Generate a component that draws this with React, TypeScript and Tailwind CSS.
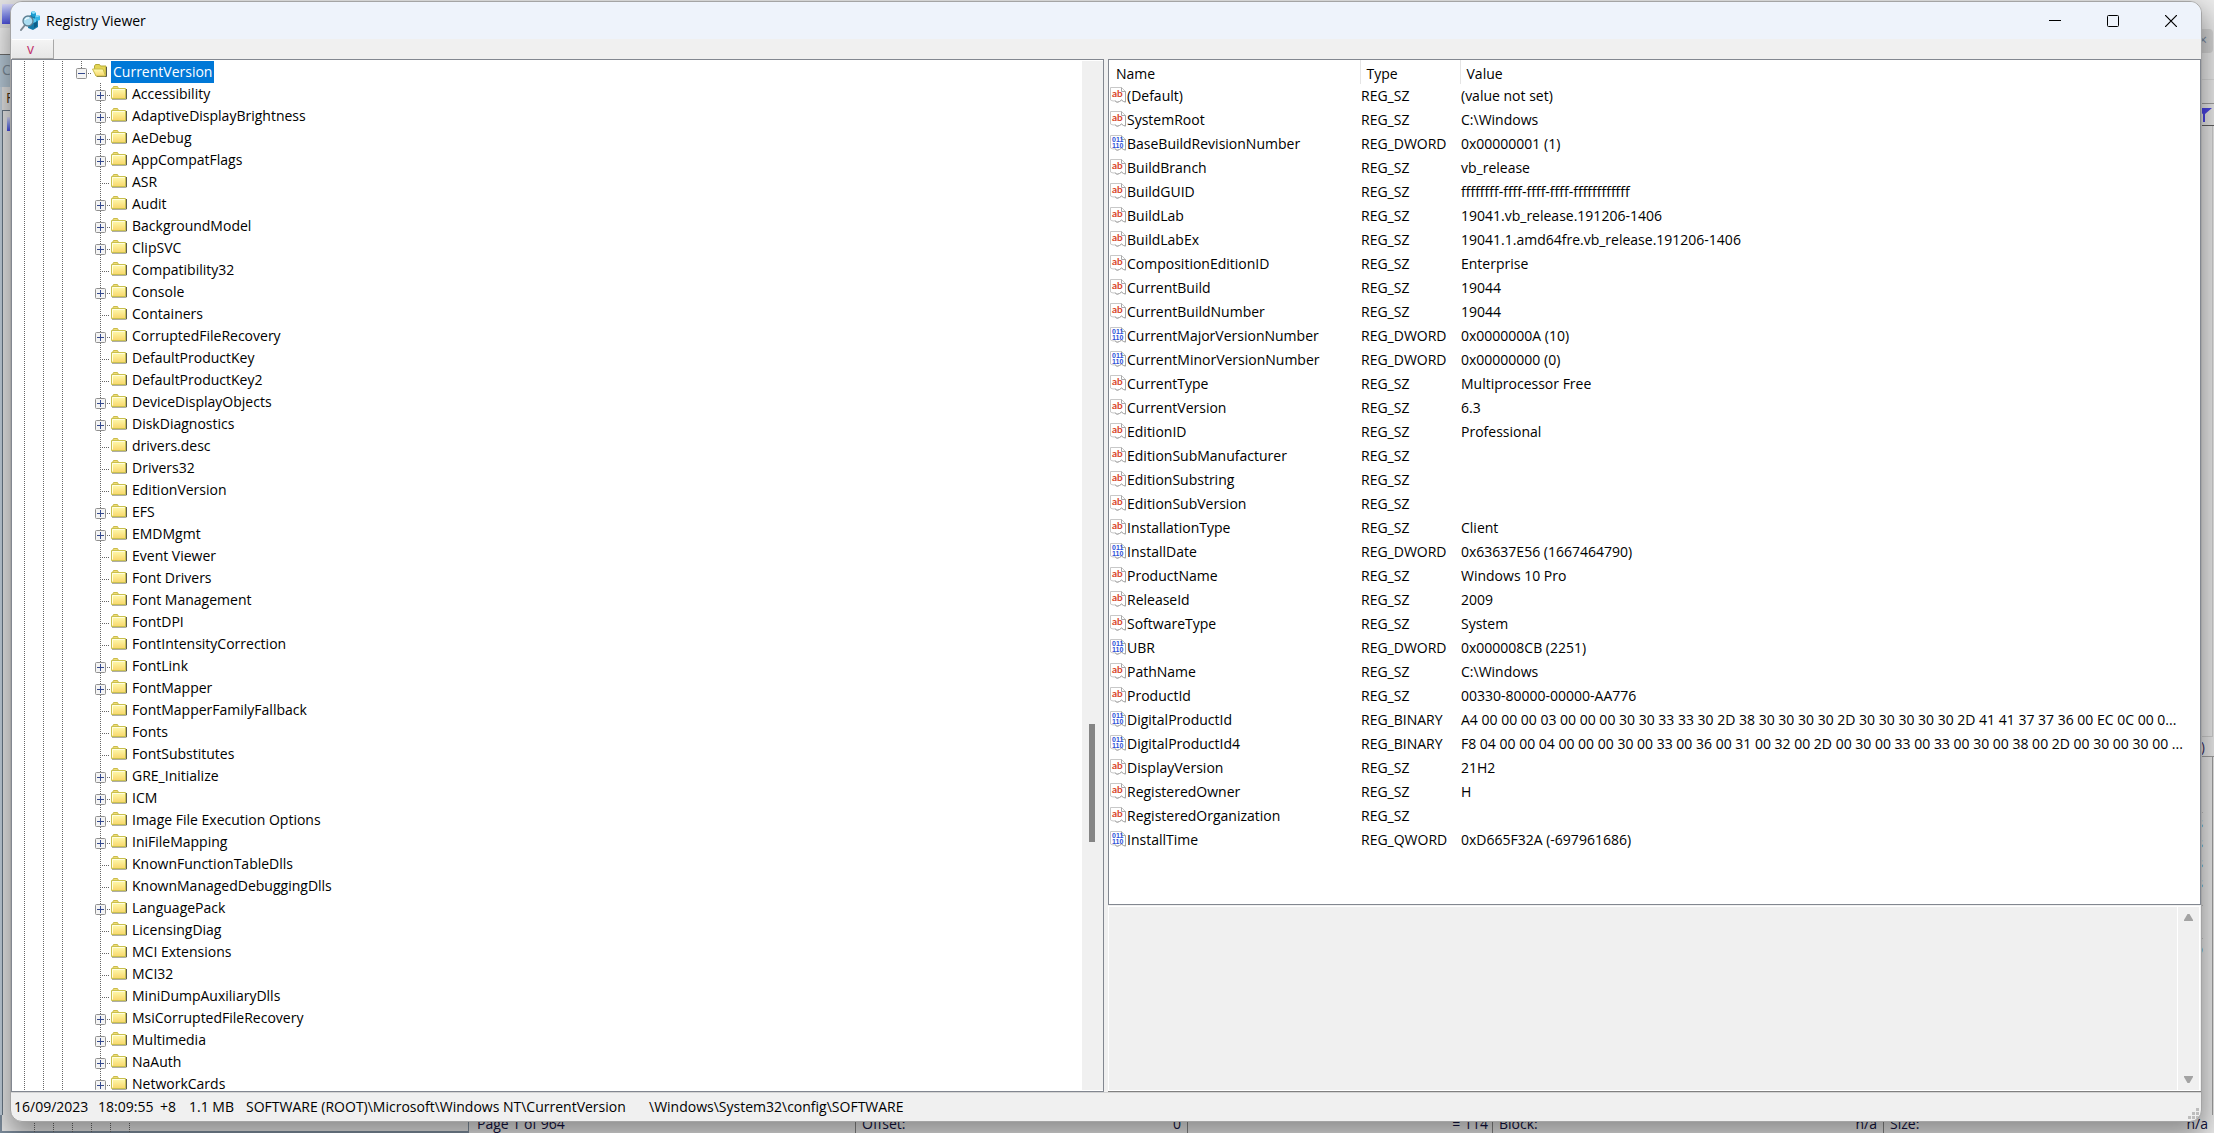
import React, { useState } from 'react';

type ValueRow = [name: string, type: string, value: string];

// "+" in front of the name: the key has sub keys
const subKeys: string[] = [
    '+Accessibility',
    '+AdaptiveDisplayBrightness',
    '+AeDebug',
    '+AppCompatFlags',
    'ASR',
    '+Audit',
    '+BackgroundModel',
    '+ClipSVC',
    'Compatibility32',
    '+Console',
    'Containers',
    '+CorruptedFileRecovery',
    'DefaultProductKey',
    'DefaultProductKey2',
    '+DeviceDisplayObjects',
    '+DiskDiagnostics',
    'drivers.desc',
    'Drivers32',
    'EditionVersion',
    '+EFS',
    '+EMDMgmt',
    'Event Viewer',
    'Font Drivers',
    'Font Management',
    'FontDPI',
    'FontIntensityCorrection',
    '+FontLink',
    '+FontMapper',
    'FontMapperFamilyFallback',
    'Fonts',
    'FontSubstitutes',
    '+GRE_Initialize',
    '+ICM',
    '+Image File Execution Options',
    '+IniFileMapping',
    'KnownFunctionTableDlls',
    'KnownManagedDebuggingDlls',
    '+LanguagePack',
    'LicensingDiag',
    'MCI Extensions',
    'MCI32',
    'MiniDumpAuxiliaryDlls',
    '+MsiCorruptedFileRecovery',
    '+Multimedia',
    '+NaAuth',
    '+NetworkCards',
];

const values: ValueRow[] = [
    ['(Default)', 'REG_SZ', '(value not set)'],
    ['SystemRoot', 'REG_SZ', 'C:\\Windows'],
    ['BaseBuildRevisionNumber', 'REG_DWORD', '0x00000001 (1)'],
    ['BuildBranch', 'REG_SZ', 'vb_release'],
    ['BuildGUID', 'REG_SZ', 'ffffffff-ffff-ffff-ffff-ffffffffffff'],
    ['BuildLab', 'REG_SZ', '19041.vb_release.191206-1406'],
    ['BuildLabEx', 'REG_SZ', '19041.1.amd64fre.vb_release.191206-1406'],
    ['CompositionEditionID', 'REG_SZ', 'Enterprise'],
    ['CurrentBuild', 'REG_SZ', '19044'],
    ['CurrentBuildNumber', 'REG_SZ', '19044'],
    ['CurrentMajorVersionNumber', 'REG_DWORD', '0x0000000A (10)'],
    ['CurrentMinorVersionNumber', 'REG_DWORD', '0x00000000 (0)'],
    ['CurrentType', 'REG_SZ', 'Multiprocessor Free'],
    ['CurrentVersion', 'REG_SZ', '6.3'],
    ['EditionID', 'REG_SZ', 'Professional'],
    ['EditionSubManufacturer', 'REG_SZ', ''],
    ['EditionSubstring', 'REG_SZ', ''],
    ['EditionSubVersion', 'REG_SZ', ''],
    ['InstallationType', 'REG_SZ', 'Client'],
    ['InstallDate', 'REG_DWORD', '0x63637E56 (1667464790)'],
    ['ProductName', 'REG_SZ', 'Windows 10 Pro'],
    ['ReleaseId', 'REG_SZ', '2009'],
    ['SoftwareType', 'REG_SZ', 'System'],
    ['UBR', 'REG_DWORD', '0x000008CB (2251)'],
    ['PathName', 'REG_SZ', 'C:\\Windows'],
    ['ProductId', 'REG_SZ', '00330-80000-00000-AA776'],
    [
        'DigitalProductId',
        'REG_BINARY',
        'A4 00 00 00 03 00 00 00 30 30 33 33 30 2D 38 30 30 30 30 2D 30 30 30 30 30 2D 41 41 37 37 36 00 EC 0C 00 0...',
    ],
    [
        'DigitalProductId4',
        'REG_BINARY',
        'F8 04 00 00 04 00 00 00 30 00 33 00 36 00 31 00 32 00 2D 00 30 00 33 00 33 00 30 00 38 00 2D 00 30 00 30 00 ...',
    ],
    ['DisplayVersion', 'REG_SZ', '21H2'],
    ['RegisteredOwner', 'REG_SZ', 'H'],
    ['RegisteredOrganization', 'REG_SZ', ''],
    ['InstallTime', 'REG_QWORD', '0xD665F32A (-697961686)'],
];

const RegistryIcon = () => (
    <svg width="20" height="20" viewBox="0 0 20 20" className="flex-none">
        <path d="M9 5l4-2 5 3v10l-5 3-5-2z" fill="#1379a8" />
        <path d="M11 1l3-1 2 2v3l-3 1-2-2z" fill="#1b9bd0" />
        <path d="M15 5l3-1 2 1v4l-3 1-2-1z" fill="#35b5e6" />
        <path d="M13 7l3 1v3l-3 1-2-2z" fill="#54c8f0" />
        <path d="M14 12l3-1v4l-3 2z" fill="#0c5d88" />
        <path d="M11 1l3-1 2 2-3 1zM15 5l3-1 2 1-3 1z" fill="#8fe0fa" />
        <path d="M5 14l-4 5" stroke="#7b8791" strokeWidth="2" strokeLinecap="round" />
        <circle cx="8" cy="10" r="5" fill="#a9dcf1" stroke="#5d7f92" strokeWidth="1.3" />
        <path d="M5 9a4 4 0 0 1 4-2" stroke="#effaff" strokeWidth="1.3" fill="none" />
    </svg>
);

const FolderIcon = ({ open = false }: { open?: boolean }) => (
    <svg width="16" height="16" viewBox="0 0 16 16" className="mb-0.5 ml-px flex-none">
        <defs>
            <linearGradient id="folder" x1="0" y1="0" x2="0" y2="1">
                <stop offset="0" stopColor="#fffbb0" />
                <stop offset="1" stopColor="#f8d66a" />
            </linearGradient>
        </defs>
        {open ? (
            <>
                <path d="M2.500 5V3l1-1.500h4l1 1.500h5.500v10H4z" fill="#e3d455" stroke="#b5aa3a" />
                <path d="M14.500 4v9.500H5" fill="none" stroke="#55554a" />
                <path d="M.500 6h10.500l2.500 7H4z" fill="url(#folder)" stroke="#c9bd4c" />
            </>
        ) : (
            <>
                <path d="M1.500 3.500l1-2h4l1 2z" fill="#f3dc72" stroke="#c9bd4c" />
                <path d="M15.500 4v10H1" fill="none" stroke="#5e5c50" />
                <path d="M.500 3.500h14v10H.500z" fill="url(#folder)" stroke="#c9c04e" />
                <path d="M1.500 12.500v-8h12" fill="none" stroke="#fffde0" />
            </>
        )}
    </svg>
);

const ValueIcon = ({ type }: { type: string }) => (
    <svg width="16" height="16" viewBox="0 0 16 16" className="mb-0.5 flex-none">
        <path
            d="M.500 .500h11l4 4v10.500l-2-.500-2-1.500-2 1.500-2.500 .800-2-1.500-2 .200-2.500-1z"
            fill="#fff"
            stroke="#c8c8c8"
        />
        <path d="M11.500 .500v4h4v10.500l-2-.500-2-1.500-2 1.500-2.500 .800-2-1.500" fill="none" stroke="#a8a8a8" />
        {type === 'REG_SZ' ? (
            <text x="2" y="10" fontSize="10" fontWeight="bold" fontFamily="Lato, sans-serif" fill="#d9472b">
                ab
            </text>
        ) : (
            <g fontSize="7" fontWeight="bold" fontFamily="Liberation Sans, sans-serif" fill="#2c4fd8">
                <text x="2" y="7">
                    011
                </text>
                <text x="2" y="13">
                    110
                </text>
            </g>
        )}
    </svg>
);

// vertical dotted line of one parent level
const Guide = ({ half = false }: { half?: boolean }) => (
    <svg width="19" height="22" viewBox="0 0 19 22" className="flex-none">
        <path d={half ? 'M9.500 0v7' : 'M9.500 0v22'} stroke="#666" strokeDasharray="1 1" />
    </svg>
);

const Expander = ({ name, open, line }: { name: string; open?: boolean; line: string }) => (
    <button type="button" aria-label={`Expand ${name}`} className="h-[22px] w-[19px] flex-none">
        <svg width="19" height="22" viewBox="0 0 19 22">
            <path d={line} stroke="#666" strokeDasharray="1 1" />
            <path d="M16 12.500h3" stroke="#666" strokeDasharray="1 1" />
            <rect x="4.500" y="7.500" width="10" height="10" rx="1" fill="#f4f4f4" stroke="#919191" />
            <path d={open ? 'M6 12.500h7' : 'M6 12.500h7M9.500 9v7'} stroke="#34498c" />
        </svg>
    </button>
);

const TreeItem = ({
    label,
    selected,
    onSelect,
}: {
    label: string;
    selected: boolean;
    onSelect: (name: string) => void;
}) => {
    const hasChildren = label.startsWith('+');
    const name = label.replace('+', '');

    return (
        <li className="flex h-[22px] items-center">
            <Guide />
            <Guide />
            <Guide />
            <span className="w-[19px] flex-none" />
            {hasChildren ? (
                <Expander name={name} line="M9.500 0v22" />
            ) : (
                <svg width="19" height="22" viewBox="0 0 19 22" className="flex-none">
                    <path d="M9.500 0v22M11 12.500h8" stroke="#666" strokeDasharray="1 1" />
                </svg>
            )}
            <FolderIcon />
            <button
                type="button"
                onClick={() => onSelect(name)}
                className={`ml-[3px] h-[22px] px-0.5 whitespace-nowrap ${selected ? 'bg-[#0078d7] text-white' : ''}`}
            >
                {name}
            </button>
        </li>
    );
};

// The program whose edges show around the viewer window
const BackWindow = () => (
    <div className="flex h-full flex-col bg-[#ececec] text-[#101040]" aria-hidden="true">
        <div className="flex min-h-0 flex-1 justify-between">
            <div className="flex w-10 flex-col">
                <div className="h-7 bg-[#e4e4e4] pt-1 pl-0.5">
                    <div className="h-5 w-4 bg-linear-to-b from-[#d8d8f8] to-[#5050e0]" />
                </div>
                <div className="h-[27px] border-b border-[#707070] bg-[#f4f4f4]" />
                <div className="h-8 bg-[#b9cbd9] pt-1 pl-0.5 text-[#7d8b98]">C</div>
                <div className="h-[23px] border-l-2 border-[#c5d3e0] bg-[#e6e6e6] pl-1 text-[#503010]">F</div>
                <div className="flex-1 border-l-2 border-[#c5d3e0]">
                    <div className="h-full border-t border-l border-[#6b7a88] bg-[#ededed] pt-1.5 pl-1">
                        <div className="h-3.5 w-4 bg-linear-to-b from-[#e0e0f8] to-[#4848e8]" />
                    </div>
                </div>
            </div>
            <div className="flex w-12 flex-col text-right text-[#2050b0]">
                <div className="h-[29px] bg-[#ececec]" />
                <div className="mr-px h-6 rounded-sm bg-[#d6d6d6] pr-1.5 text-[#7888a0]">×</div>
                <div className="h-[27px] border-b border-[#dcdcdc]" />
                <div className="h-6 border-b border-[#a0a0a0]" />
                <div className="flex h-[22px] items-center justify-end border-b border-[#606060] pr-0.5">
                    <svg width="18" height="15" viewBox="0 0 18 15">
                        <path d="M0 1h18l-7 6v8H9V7z" fill="#4c46e8" />
                    </svg>
                </div>
                <div className="mr-px h-[611px] border-r border-b border-[#d0d0d0]" />
                <div className="h-5 border-b border-[#a0a0a0] pr-[9px] leading-5 text-[#403060]">)</div>
                <div className="mr-px flex-1 border-r border-[#a0a0a0] pr-[9px] leading-5">
                    <div className="h-14 border-b border-[#c4c4c4]" />
                    <div>bytes</div>
                    <div>bytes</div>
                    <div>bytes</div>
                    <div>bytes</div>
                    <div className="mt-3 h-[34px] border-y border-[#c4c4c4]" />
                    <div>No</div>
                </div>
            </div>
        </div>
        <div className="flex h-[18px] items-center bg-[#ececec]">
            <div className="flex h-full w-[469px] border-r border-b-2 border-l-2 border-[#8090a0] pl-[23px]">
                <Guide />
                <Guide />
                <Guide />
                <Guide />
                <Guide />
                <Guide />
            </div>
            <div className="grid h-full flex-1 grid-cols-[387px_332px_305px_391px_1fr] leading-[18px]">
                <div className="border-r border-[#888] pl-2">Page 1 of 964</div>
                <div className="flex justify-between border-r border-[#888] px-1.5">
                    <span>Offset:</span>
                    <span>0</span>
                </div>
                <div className="border-r border-[#888] pr-1 text-right">= 114</div>
                <div className="flex justify-between border-r border-[#888] px-1.5">
                    <span>Block:</span>
                    <span>n/a</span>
                </div>
                <div className="flex justify-between px-1.5">
                    <span>Size:</span>
                    <span>n/a</span>
                </div>
            </div>
        </div>
    </div>
);

const App = () => {
    const [current, setCurrent] = useState<string>('CurrentVersion');

    return (
        <div className="relative h-screen overflow-hidden font-['Open_Sans','Noto_Sans',sans-serif] text-[14px] leading-[22px] text-black [font-variant-ligatures:none]">
            <BackWindow />

            <div className="absolute top-px right-3 bottom-[11px] left-2.5 flex flex-col overflow-hidden rounded-xl border border-[#a4a4a4] bg-[#f0f0f0] shadow-[0_12px_28px_4px_rgba(0,0,0,0.4)]">
                {/* title bar */}
                <header className="flex h-[37px] flex-none items-center bg-[#eef3fb]">
                    <div className="flex flex-1 items-center gap-1.5 pl-[9px]">
                        <RegistryIcon />
                        <h1>Registry Viewer</h1>
                    </div>
                    <div className="mr-px flex h-full">
                        <button type="button" aria-label="Minimize" className="flex w-[58px] items-center justify-center">
                            <svg width="12" height="12" viewBox="0 0 12 12">
                                <path d="M0 5.500h12" stroke="#000" />
                            </svg>
                        </button>
                        <button type="button" aria-label="Maximize" className="flex w-[58px] items-center justify-center">
                            <svg width="12" height="12" viewBox="0 0 12 12" fill="none">
                                <rect x=".5" y=".5" width="11" height="11" rx="1" stroke="#000" />
                            </svg>
                        </button>
                        <button type="button" aria-label="Close" className="flex w-[58px] items-center justify-center">
                            <svg width="12" height="12" viewBox="0 0 12 12">
                                <path d="M0 0l12 12M12 0L0 12" stroke="#000" strokeWidth="1.200" />
                            </svg>
                        </button>
                    </div>
                </header>

                {/* toolbar */}
                <div className="flex h-5 flex-none">
                    <button
                        type="button"
                        className="ml-px w-[42px] border-t border-r border-b border-t-white border-r-[#a8a8a8] border-b-[#a8a8a8] bg-linear-to-b from-[#f4f4f4] to-[#e6e6e6] pr-1 text-[14px] leading-4 text-[#c0306c]"
                    >
                        v
                    </button>
                </div>

                <main className="grid min-h-0 flex-1 grid-cols-2 gap-1">
                    {/* key tree */}
                    <nav className="flex min-h-0 border border-[#828790] bg-white pt-px pb-px pl-px">
                        <ul className="min-w-0 flex-1 overflow-hidden pl-0.5">
                            <li className="flex h-[22px] items-center">
                                <Guide />
                                <Guide />
                                <Guide />
                                <Expander name="CurrentVersion" open line="M9.500 0v7" />
                                <FolderIcon open />
                                <button
                                    type="button"
                                    onClick={() => setCurrent('CurrentVersion')}
                                    className={`ml-[3px] h-[22px] px-0.5 ${current === 'CurrentVersion' ? 'bg-[#0078d7] text-white' : ''}`}
                                >
                                    CurrentVersion
                                </button>
                            </li>
                            {subKeys.map((label) => (
                                <TreeItem
                                    key={label}
                                    label={label}
                                    selected={current === label.replace('+', '')}
                                    onSelect={setCurrent}
                                />
                            ))}
                        </ul>
                        <div className="flex w-[21px] flex-none flex-col bg-[#f0f0f0] pl-[7px]">
                            <div className="grow-[663]" />
                            <div className="w-1.5 grow-[118] bg-[#858585]" />
                            <div className="grow-[248]" />
                        </div>
                    </nav>

                    <div className="flex min-h-0 min-w-0 flex-col">
                        {/* values of the selected key */}
                        <div className="min-h-0 flex-1 overflow-hidden border border-[#828790] bg-white">
                            <table className="w-full table-fixed border-collapse text-left">
                                <colgroup>
                                    <col className="w-[251px]" />
                                    <col className="w-[100px]" />
                                    <col />
                                </colgroup>
                                <thead>
                                    <tr className="h-6">
                                        <th className="border-r border-[#e5e5e5] p-0 pt-1 pl-[7px] leading-5 font-normal">Name</th>
                                        <th className="border-r border-[#e5e5e5] p-0 pt-1 pl-1.5 leading-5 font-normal">Type</th>
                                        <th className="p-0 pt-1 pl-1.5 leading-5 font-normal">Value</th>
                                    </tr>
                                </thead>
                                <tbody>
                                    {values.map(([name, type, value]) => (
                                        <tr key={name} className="h-6">
                                            <td className="p-0 pl-px">
                                                <div className="flex items-center gap-px">
                                                    <ValueIcon type={type} />
                                                    <span>{name}</span>
                                                </div>
                                            </td>
                                            <td className="p-0 pl-px">{type}</td>
                                            <td className="overflow-hidden p-0 pl-px whitespace-nowrap">{value}</td>
                                        </tr>
                                    ))}
                                </tbody>
                            </table>
                        </div>

                        {/* raw data of the selected value */}
                        <div className="flex h-[187px] flex-none border-b border-[#808080] pt-px">
                            <textarea
                                readOnly
                                aria-label="Value data"
                                className="block flex-1 resize-none border border-r-0 border-white bg-[#f0f0f0]"
                            />
                            <div className="mr-px flex w-[23px] flex-col items-center justify-between border border-white py-[7px]">
                                <svg width="9" height="7" viewBox="0 0 9 7">
                                    <path d="M3.500 0h2L9 6v1H0V6z" fill="#a3a3a3" />
                                </svg>
                                <svg width="9" height="7" viewBox="0 0 9 7">
                                    <path d="M3.500 7h2L9 1V0H0v1z" fill="#a3a3a3" />
                                </svg>
                            </div>
                        </div>
                    </div>
                </main>

                {/* status bar */}
                <footer className="flex h-[29px] flex-none items-center border-t border-[#d4d4d4] pl-[3px] whitespace-nowrap">
                    <span className="w-[84px]">16/09/2023</span>
                    <span className="w-[62px]">18:09:55</span>
                    <span className="w-[29px]">+8</span>
                    <span className="w-[57px]">1.1 MB</span>
                    <span className="w-[403px]">SOFTWARE (ROOT)\Microsoft\Windows NT\CurrentVersion</span>
                    <span className="flex-1">\Windows\System32\config\SOFTWARE</span>
                    <svg width="11" height="11" viewBox="0 0 11 11" className="mr-0.5 mb-0.5 self-end">
                        <path
                            d="M8 0h3v3H8zM4 4h3v3H4zM8 4h3v3H8zM0 8h3v3H0zM4 8h3v3H4zM8 8h3v3H8z"
                            fill="#bdbdbd"
                        />
                    </svg>
                </footer>
            </div>
        </div>
    );
};

export default App;
